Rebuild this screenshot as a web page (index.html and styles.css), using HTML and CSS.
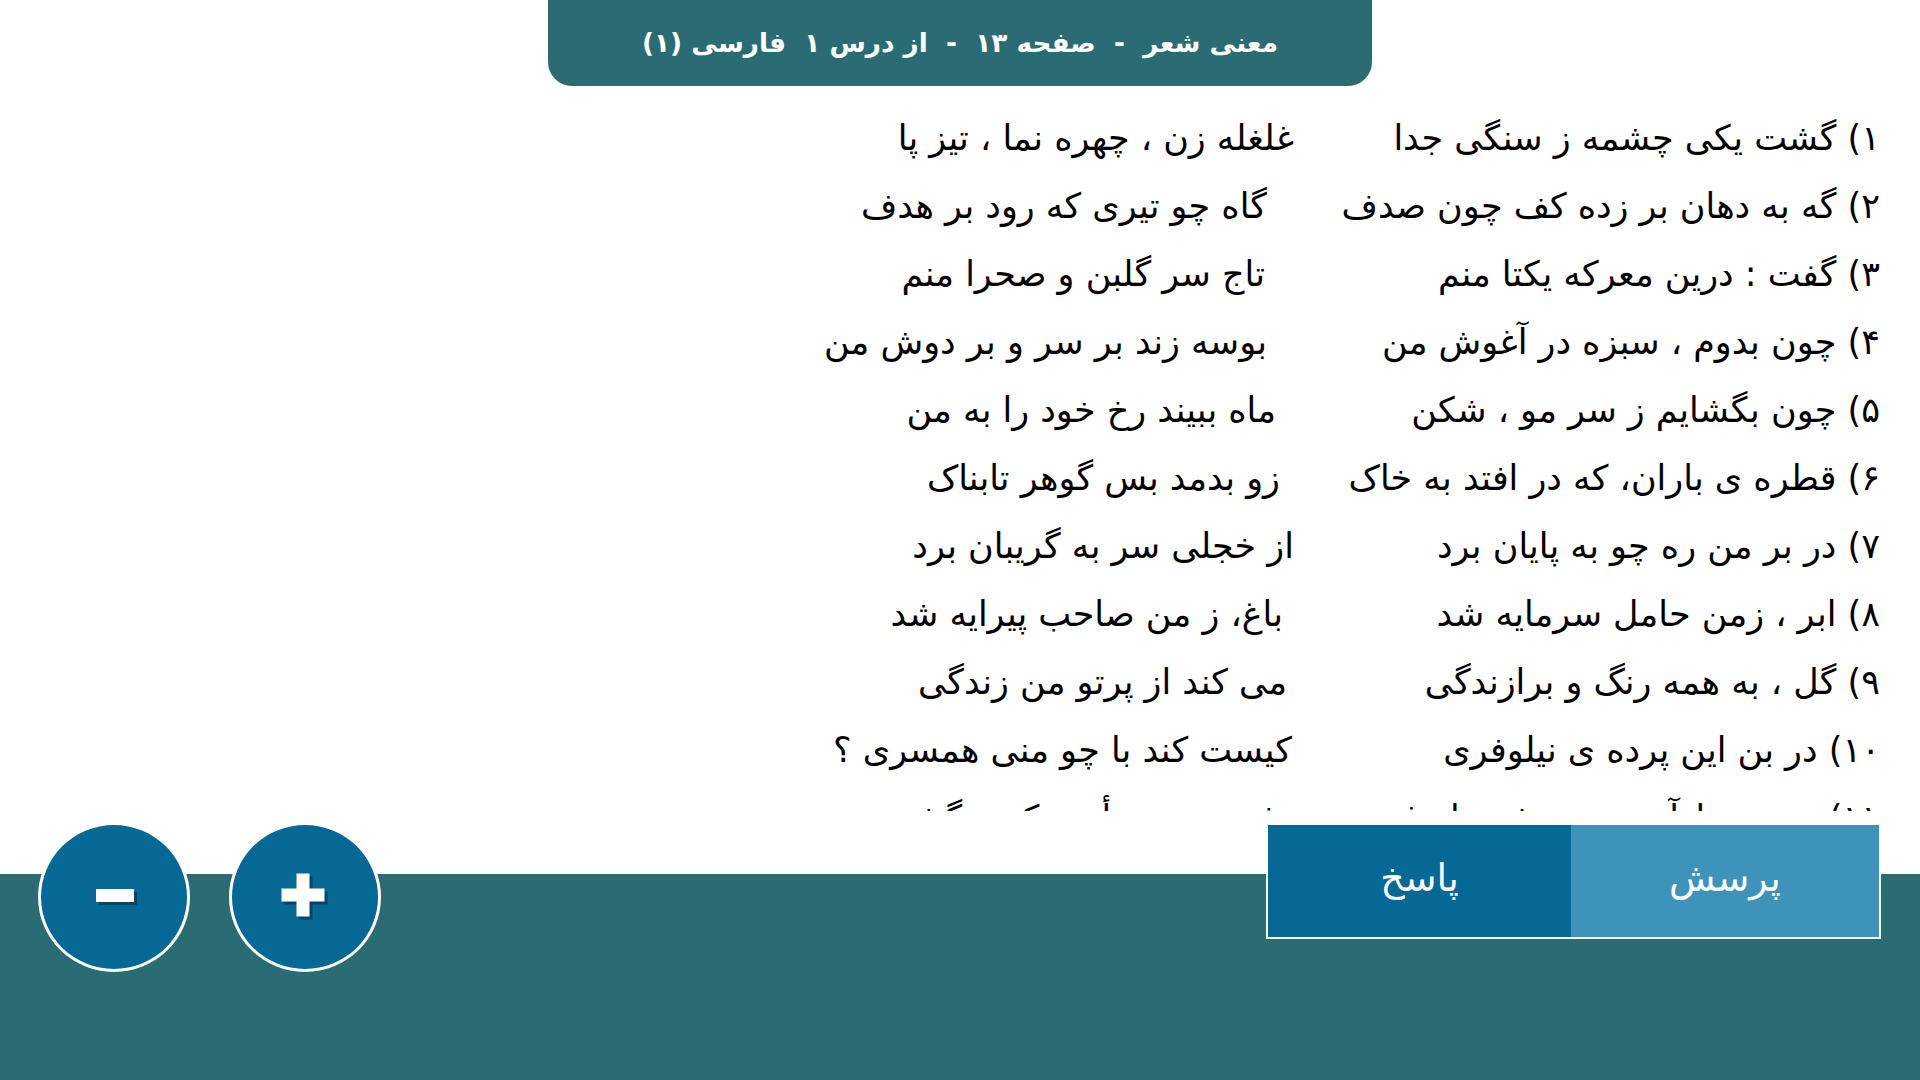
FILE: index.html
```html
<!DOCTYPE html>
<html lang="fa" dir="rtl">
<head>
<meta charset="utf-8">
<title>معنی شعر</title>
<link rel="stylesheet" href="styles.css">
</head>
<body>
<div class="page">
  <header class="tab">
    <h1 class="tab-title">معنی شعر&nbsp; - &nbsp;صفحه ۱۳&nbsp; - &nbsp;از درس ۱&nbsp; فارسی (۱)</h1>
  </header>
  <main class="poem">
    <div class="row"><span class="right">۱) گشت یکی چشمه ز سنگی جدا</span><span class="left">غلغله زن ، چهره نما ، تیز پا</span></div>
    <div class="row"><span class="right">۲) گه به دهان بر زده کف چون صدف</span><span class="left">گاه چو تیری که رود بر هدف</span></div>
    <div class="row"><span class="right">۳) گفت : درین معرکه یکتا منم</span><span class="left">تاج سر گلبن و صحرا منم</span></div>
    <div class="row"><span class="right">۴) چون بدوم ، سبزه در آغوش من</span><span class="left">بوسه زند بر سر و بر دوش من</span></div>
    <div class="row"><span class="right">۵) چون بگشایم ز سر مو ، شکن</span><span class="left">ماه ببیند رخ خود را به من</span></div>
    <div class="row"><span class="right">۶) قطره ی باران، که در افتد به خاک</span><span class="left">زو بدمد بس گوهر تابناک</span></div>
    <div class="row"><span class="right">۷) در بر من ره چو به پایان برد</span><span class="left">از خجلی سر به گریبان برد</span></div>
    <div class="row"><span class="right">۸) ابر ، زمن حامل سرمایه شد</span><span class="left">باغ، ز من صاحب پیرایه شد</span></div>
    <div class="row"><span class="right">۹) گل ، به همه رنگ و برازندگی</span><span class="left">می کند از پرتو من زندگی</span></div>
    <div class="row"><span class="right">۱۰) در بن این پرده ی نیلوفری</span><span class="left">کیست کند با چو منی همسری ؟</span></div>
    <div class="row"><span class="right">۱۱) زین نمط آن مست شده از غرور</span><span class="left">رفت و ز مبدأ چو کمی گشت دور</span></div>
  </main>
  <footer class="footer">
    <div class="tabs">
      <button class="tab-btn ask">پرسش</button>
      <button class="tab-btn answer">پاسخ</button>
    </div>
    <div class="zoom">
      <button class="circle plus" aria-label="بزرگنمایی">
        <svg viewBox="0 0 52 52" width="52" height="52"><path d="M20.5 5.5h13v15h15v13h-15v15h-13v-15h-15v-13h15z" fill="#0b4566"/><path d="M17.5 2.5h13v15h15v13h-15v15h-13v-15h-15v-13h15z" fill="#fff"/></svg>
      </button>
      <button class="circle minus" aria-label="کوچک‌نمایی">
        <svg viewBox="0 0 48 20" width="48" height="20"><rect x="9" y="5" width="38" height="13" fill="#0b4566"/><rect x="6" y="2" width="38" height="13" fill="#fff"/></svg>
      </button>
    </div>
  </footer>
</div>
</body>
</html>
```

FILE: styles.css
```css
html, body {
  margin: 0;
  padding: 0;
  background: #ffffff;
}
body {
  font-family: "DejaVu Sans", "Noto Sans", sans-serif;
  color: #000;
}
.page {
  width: 1920px;
  height: 1080px;
  display: flex;
  flex-direction: column;
  overflow: hidden;
}
.tab {
  align-self: center;
  width: 824px;
  height: 86px;
  background: #2b6c74;
  border-radius: 0 0 24px 24px;
  display: flex;
  align-items: center;
  justify-content: center;
}
.tab-title {
  margin: 0;
  color: #fff;
  font-size: 26.3px;
  font-weight: bold;
  white-space: pre;
  padding-bottom: 1px;
}
.poem {
  margin-top: 18px;
  height: 707px;
  overflow: hidden;
  padding-right: 40px;
}
.row {
  height: 68px;
  display: grid;
  grid-template-columns: 586px auto;
  align-items: center;
  font-size: 35px;
  white-space: nowrap;
}
.right, .left {
  text-align: right;
}
.row:nth-child(2) .left { margin-right: 27px; }
.row:nth-child(3) .left { margin-right: 29px; }
.row:nth-child(4) .left { margin-right: 27px; }
.row:nth-child(5) .left { margin-right: 18px; }
.row:nth-child(6) .left { margin-right: 14px; }
.row:nth-child(8) .left { margin-right: 11px; }
.row:nth-child(9) .left { margin-right: 7px; }
.row:nth-child(10) .left { margin-right: 2px; }
.footer {
  flex: 1;
  background: linear-gradient(to bottom, #ffffff 63px, #2b6c74 63px);
  display: flex;
  justify-content: space-between;
  align-items: flex-start;
  padding: 11px 39px 0 38px;
}
.tabs {
  display: flex;
  border: 2px solid #ffffff;
  margin-top: 1px;
}
.tab-btn {
  border: none;
  margin: 0;
  height: 112px;
  color: #fff;
  font-family: "DejaVu Sans", sans-serif;
  font-size: 38px;
  padding: 0 0 6px;
}
.ask {
  width: 308px;
  background: #3d93b9;
}
.answer {
  width: 303px;
  background: #066894;
}
.zoom {
  display: flex;
  gap: 39px;
}
.circle {
  width: 152px;
  height: 150px;
  border-radius: 50%;
  border: 3px solid #ffffff;
  background: #066894;
  padding: 0;
  margin: 0;
  display: flex;
  align-items: center;
  justify-content: center;
}
.circle svg {
  display: block;
}
```
